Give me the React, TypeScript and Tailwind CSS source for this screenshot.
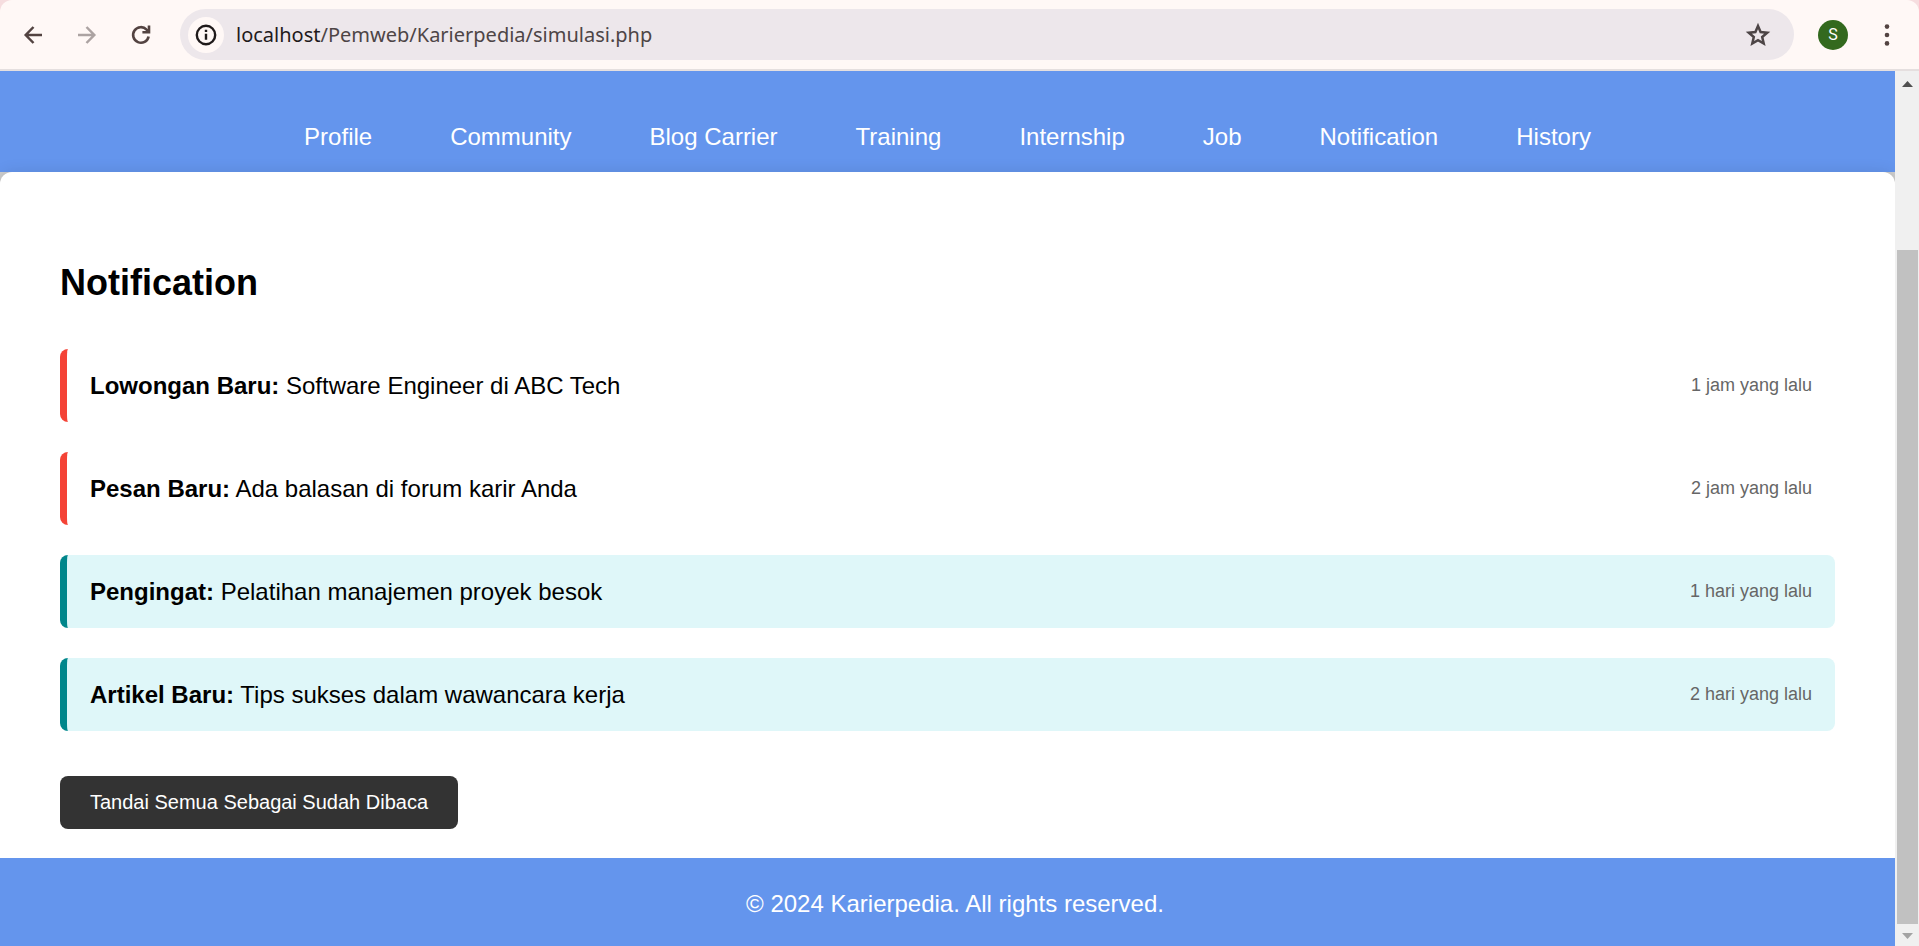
const navItems = ['Profile', 'Community', 'Blog Carrier', 'Training', 'Internship', 'Job', 'Notification', 'History'];

type Notice = { label: string; text: string; time: string; read: boolean };

const notices: Notice[] = [
  { label: 'Lowongan Baru:', text: 'Software Engineer di ABC Tech', time: '1 jam yang lalu', read: false },
  { label: 'Pesan Baru:', text: 'Ada balasan di forum karir Anda', time: '2 jam yang lalu', read: false },
  { label: 'Pengingat:', text: 'Pelatihan manajemen proyek besok', time: '1 hari yang lalu', read: true },
  { label: 'Artikel Baru:', text: 'Tips sukses dalam wawancara kerja', time: '2 hari yang lalu', read: true },
];

function BrowserBar() {
  return (
    <div className="bg-[#f6dddf]">
      <div className="flex items-center rounded-t-xl border-b-2 border-[#e5dfdf] bg-[#fff8f6] py-[9px] pl-[18px] pr-[17px] text-[#534341]">
        <div className="flex items-center gap-6">
          <button type="button" aria-label="Back" className="p-1">
            <svg className="size-[22px]" viewBox="0 0 22 22" fill="none" stroke="currentColor" strokeWidth="2.5">
              <path d="M20 11H4M11.5 3L3.7 11l7.8 8" />
            </svg>
          </button>
          <button type="button" aria-label="Forward" className="p-1 text-[#aca3a2]">
            <svg className="size-[22px]" viewBox="0 0 22 22" fill="none" stroke="currentColor" strokeWidth="2.5">
              <path d="M2 11h16M10.5 3l7.8 8-7.8 8" />
            </svg>
          </button>
          <button type="button" aria-label="Reload" className="p-1">
            <svg className="size-[22px]" viewBox="0 0 22 22" fill="none" stroke="currentColor" strokeWidth="2.6">
              <path d="M18.6 12.4A7.8 7.8 0 1 1 16.6 5.6L18.6 7.6" />
              <path d="M19 1.6v6.6h-6.6" />
            </svg>
          </button>
        </div>
        <div className="ml-6 flex h-[51px] flex-1 items-center rounded-full bg-[#ede7eb] pl-2 pr-[22px]">
          <button type="button" aria-label="View site information" className="grid size-9 place-items-center rounded-full bg-[#fff8f6] text-[#1f1a1a]">
            <svg className="size-6" viewBox="0 0 24 24" fill="none" stroke="currentColor" strokeWidth="2.4">
              <circle cx="12" cy="12" r="9.2" />
              <path d="M12 10.8v6M12 6.8v2.3" />
            </svg>
          </button>
          <div className="ml-3 flex-1 font-['Noto_Sans',sans-serif] text-[20px] leading-7 text-[#4d4546]">
            <span className="text-[#1f1a1b]">localhost</span>/Pemweb/Karierpedia/simulasi.php
          </div>
          <button type="button" aria-label="Bookmark this page" className="text-[#4d4546]">
            <svg className="size-7" viewBox="0 0 28 28" fill="none" stroke="currentColor" strokeWidth="2.5">
              <path d="M14 5l2.6 6.1 6.6.6-5 4.3 1.5 6.5L14 19.1l-5.7 3.4L9.8 16l-5-4.3 6.6-.6z" />
            </svg>
          </button>
        </div>
        <button type="button" aria-label="Account" className="ml-6 grid size-[30px] place-items-center rounded-full bg-[#33691e] font-['Roboto',sans-serif] text-base text-white">
          S
        </button>
        <button type="button" aria-label="Menu" className="ml-6 grid size-[30px] place-items-center">
          <svg className="size-6" viewBox="0 0 24 24" fill="currentColor">
            <circle cx="12" cy="3.6" r="2.3" />
            <circle cx="12" cy="12" r="2.3" />
            <circle cx="12" cy="20.4" r="2.3" />
          </svg>
        </button>
      </div>
    </div>
  );
}

function ScrollBar() {
  return (
    <div className="flex w-6 shrink-0 flex-col items-center bg-[#f0f0f0]" aria-hidden="true">
      <svg className="h-[22px] w-6 shrink-0" viewBox="0 0 24 22" fill="#505050">
        <path d="M7 16l5.5-6L18 16z" />
      </svg>
      <div className="flex-[157]" />
      <div className="w-[21px] flex-[674] bg-[#c1c1c1]" />
      <svg className="h-[22px] w-6 shrink-0" viewBox="0 0 24 22" fill="#a3a3a3">
        <path d="M7 9l5.5 6L18 9z" />
      </svg>
    </div>
  );
}

function NoticeRow({ notice }: { notice: Notice }) {
  return (
    <li
      className={
        notice.read
          ? 'flex items-center justify-between rounded-lg border-l-[7px] border-[#00868b] bg-[#dff7f9] px-[23px] py-[23px]'
          : 'flex items-center justify-between rounded-lg border-l-[7px] border-[#f44336] px-[23px] py-[23px]'
      }
    >
      <p className="leading-[27px]">
        <strong>{notice.label}</strong> {notice.text}
      </p>
      <span className="pb-0.5 text-[18px] leading-6 text-[#666]">{notice.time}</span>
    </li>
  );
}

export default function App() {
  return (
    <div className="flex min-h-screen flex-col font-['Liberation_Sans',Arial,sans-serif] text-2xl text-black">
      <BrowserBar />
      <div className="flex flex-1">
        <div className="flex flex-1 flex-col bg-[#ccc]">
          <nav className="bg-[#6495ed] pt-[52px] pb-[22px] text-white">
            <ul className="flex flex-wrap justify-center gap-x-[78px] leading-[27px]">
              {navItems.map((item) => (
                <li key={item}>
                  <a href={'#' + item}>{item}</a>
                </li>
              ))}
            </ul>
          </nav>
          <main className="flex-1 rounded-t-xl bg-white px-[60px] pt-[90px] pb-[29px] shadow-[0_0_15px_rgba(0,0,0,0.1)]">
            <h1 className="text-4xl leading-[42px] font-bold">Notification</h1>
            <ul className="mt-[45px] flex flex-col gap-[30px]">
              {notices.map((notice) => (
                <NoticeRow key={notice.label} notice={notice} />
              ))}
            </ul>
            <button type="button" className="mt-[45px] rounded-lg bg-[#333] px-[30px] py-[15px] text-[20px] leading-[23px] text-white">
              Tandai Semua Sebagai Sudah Dibaca
            </button>
          </main>
          <footer className="relative bg-[#6495ed] pt-8 pb-7 pl-[15px] text-center leading-7 text-white">
            © 2024 Karierpedia. All rights reserved.
          </footer>
        </div>
        <ScrollBar />
      </div>
    </div>
  );
}
